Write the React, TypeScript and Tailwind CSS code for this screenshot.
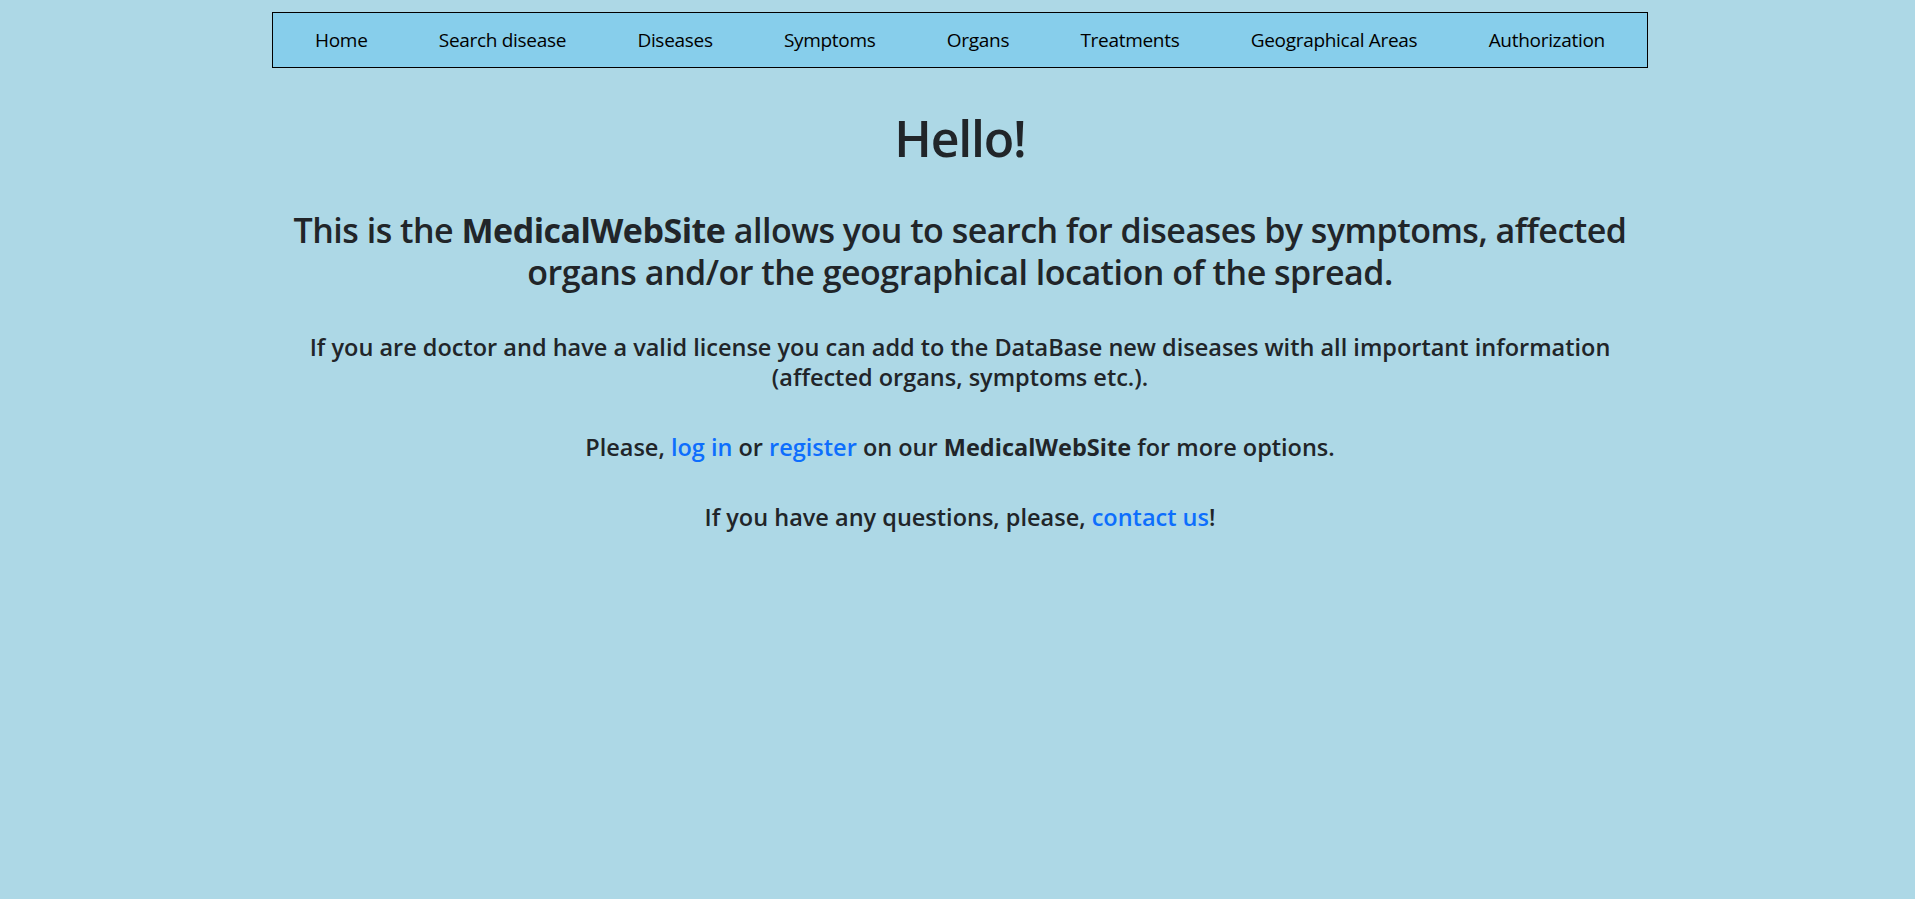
const navItems = [
  "Home",
  "Search disease",
  "Diseases",
  "Symptoms",
  "Organs",
  "Treatments",
  "Geographical Areas",
  "Authorization",
];

const FONT = "font-['Open_Sans',sans-serif]";

export default function App() {
  return (
    <div className={`min-h-[899px] bg-[#add8e6] text-[#212529] ${FONT}`}>
      <div className="ml-[272px] w-[1376px] pt-3">
        <nav className="flex h-[56px] items-center justify-between border border-black bg-[#87ceeb] px-[42px]">
          {navItems.map((item) => (
            <a key={item} href="#" className="text-[19px] tracking-[-0.3px] text-black">
              {item}
            </a>
          ))}
        </nav>

        <main className="flex flex-col items-center text-center">
          <h1 className="mt-[40px] text-[50px] leading-[60px] font-semibold tracking-[-1.2px]">Hello!</h1>

          <h3 className="mt-[41px] text-[34px] leading-[42px] font-semibold tracking-[-0.5px]">
            This is the <strong className="font-bold">MedicalWebSite</strong> allows you to search for diseases by
            symptoms, affected
            <br />
            organs and/or the geographical location of the spread.
          </h3>

          <h5 className="mt-[39px] text-[23.5px] leading-[30px] font-semibold tracking-[0px]">
            If you are doctor and have a valid license you can add to the DataBase new diseases with all important
            information
            <br />
            (affected organs, symptoms etc.).
          </h5>

          <h5 className="mt-[40px] text-[23.5px] leading-[30px] font-semibold tracking-[0px]">
            Please, <a href="#" className="text-[#0d6efd]">log in</a> or{" "}
            <a href="#" className="text-[#0d6efd]">register</a> on our{" "}
            <strong className="font-bold">MedicalWebSite</strong> for more options.
          </h5>

          <h5 className="mt-[40px] text-[23.5px] leading-[30px] font-semibold tracking-[0px]">
            If you have any questions, please, <a href="#" className="text-[#0d6efd]">contact us</a>!
          </h5>
        </main>
      </div>
    </div>
  );
}
